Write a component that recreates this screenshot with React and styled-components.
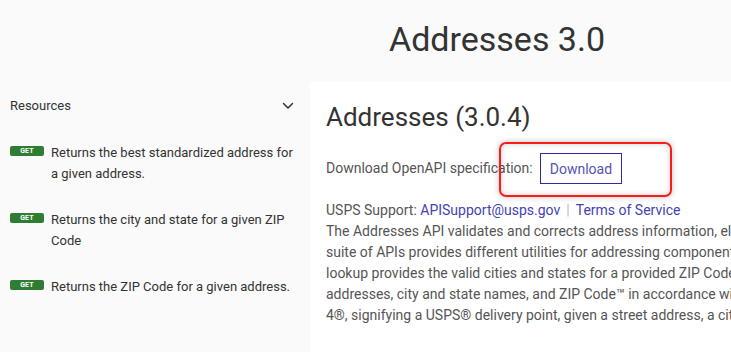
import React from 'react'
import styled, { createGlobalStyle } from 'styled-components'

const Global = createGlobalStyle`
  html, body {
    margin: 0;
    padding: 0;
    background: #fafafa;
    font-family: Roboto, "Liberation Sans", Arial, sans-serif;
    overflow: hidden;
  }
`

const Page = styled.div`
  width: 731px;
  height: 352px;
  overflow: hidden;
  background: #fafafa;
`

const Header = styled.header`
  height: 82px;
  box-sizing: border-box;
  padding: 19px 0 0 389px;
`

const Title = styled.h1`
  margin: 0;
  font-size: 34px;
  line-height: 1.2;
  font-weight: 400;
  color: #333;
  white-space: nowrap;
`

const Main = styled.div`
  display: grid;
  grid-template-columns: 310px 1fr;
  height: 270px;
`

const Sidebar = styled.nav`
  background: #fafafa;
`

const SectionRow = styled.div`
  display: flex;
  align-items: center;
  justify-content: space-between;
  padding: 14px 15px 14px 10px;
  font-size: 13px;
  line-height: 20px;
  color: #333;
`

const List = styled.ul`
  list-style: none;
  margin: 12px 0 0;
  padding: 0 10px;
  display: flex;
  flex-direction: column;
  gap: 25px;
`

const Item = styled.li`
  display: flex;
  align-items: flex-start;
  gap: 7px;
  font-size: 13px;
  line-height: 21px;
  color: #333;
`

const Badge = styled.span`
  flex: none;
  width: 34px;
  height: 10px;
  margin-top: 4px;
  border-radius: 2px;
  background: #2e7d32;
  color: #fff;
  font-size: 7px;
  font-weight: 700;
  line-height: 10px;
  text-align: center;
  letter-spacing: 0.2px;
`

const Content = styled.section`
  position: relative;
  background: #fff;
  padding: 20px 0 0 16px;
  color: #555;
  font-size: 14px;
  line-height: 21px;
`

const Version = styled.h2`
  margin: 0;
  font-size: 26px;
  line-height: 1.2;
  font-weight: 400;
  color: #333;
  white-space: nowrap;
`

const DownloadRow = styled.div`
  display: flex;
  align-items: center;
  gap: 7px;
  margin-top: 20px;
  white-space: nowrap;
`

const Button = styled.button`
  height: 31px;
  padding: 0 9px;
  border: 1px solid #2d2da3;
  border-radius: 0;
  background: #fff;
  color: #5353b9;
  font-family: inherit;
  font-size: 14px;
`

const Highlight = styled.div`
  position: absolute;
  left: 189px;
  top: 60px;
  width: 173px;
  height: 55px;
  box-sizing: border-box;
  border: 2px solid #ff1a1a;
  border-radius: 7px;
  box-shadow: 0 0 6px rgba(0, 0, 0, 0.25), inset 0 0 6px rgba(0, 0, 0, 0.18);
  pointer-events: none;
`

const Support = styled.div`
  margin-top: 16px;
  white-space: nowrap;
`

const Link = styled.a`
  color: #4343b3;
  text-decoration: none;
`

const Sep = styled.span`
  color: #bbb;
  margin: 0 6px;
`

const Description = styled.p`
  margin: 0;
  white-space: nowrap;
`

const Chevron = () => (
  <svg width="14" height="14" viewBox="0 0 14 14" fill="none" stroke="#333" strokeWidth="1.5" strokeLinecap="round" strokeLinejoin="round">
    <path d="M2.5 4.5 7 9l4.5-4.5" />
  </svg>
)

const resources = [
  'Returns the best standardized address for a given address.',
  'Returns the city and state for a given ZIP Code',
  'Returns the ZIP Code for a given address.',
]

export default function App() {
  return (
    <Page>
      <Global />
      <Header>
        <Title>Addresses 3.0</Title>
      </Header>
      <Main>
        <Sidebar>
          <SectionRow>
            <span>Resources</span>
            <Chevron />
          </SectionRow>
          <List>
            {resources.map((r) => (
              <Item key={r}>
                <Badge>GET</Badge>
                <span>{r}</span>
              </Item>
            ))}
          </List>
        </Sidebar>
        <Content>
          <Version>Addresses (3.0.4)</Version>
          <DownloadRow>
            <span>Download OpenAPI specification:</span>
            <Button>Download</Button>
          </DownloadRow>
          <Highlight />
          <Support>
            USPS Support: <Link href="#">APISupport@usps.gov</Link>
            <Sep>|</Sep>
            <Link href="#">Terms of Service</Link>
          </Support>
          <Description>
            The Addresses API validates and corrects address information, eliminating errors, improving package delivery service and package tracking. This<br />
            suite of APIs provides different utilities for addressing components. The ZIP Code™<br />
            lookup provides the valid cities and states for a provided ZIP Code™. The Address Standardization API validates and corrects<br />
            addresses, city and state names, and ZIP Code™ in accordance with USPS® addressing standards, including ZIP +<br />
            4®, signifying a USPS® delivery point, given a street address, a city and state, and a ZIP Code™.
          </Description>
        </Content>
      </Main>
    </Page>
  )
}
